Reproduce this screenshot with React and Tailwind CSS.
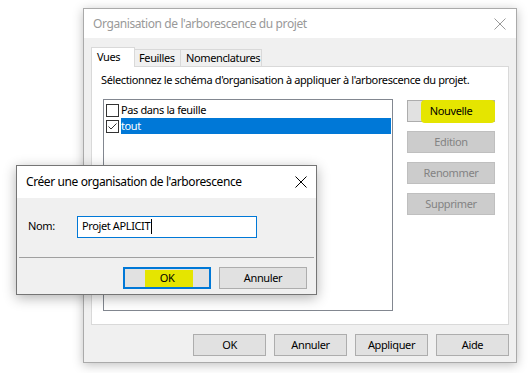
const font = { fontFamily: '"Noto Sans", "Liberation Sans", sans-serif' };

function CloseIcon({ className }) {
  return (
    <svg width="12" height="12" viewBox="0 0 12 12" className={className}>
      <path d="M0.5 0.5 L11.5 11.5 M11.5 0.5 L0.5 11.5" stroke="currentColor" strokeWidth="1" />
    </svg>
  );
}

function Button({ children, disabled, className = "" }) {
  return (
    <div
      className={`flex h-[22px] items-center justify-center border ${
        disabled
          ? "border-[#bfbfbf] bg-[#cccccc] text-[#838383]"
          : "border-[#adadad] bg-[#e1e1e1] text-black"
      } ${className}`}
    >
      {children}
    </div>
  );
}

function Checkbox({ checked }) {
  return (
    <div className="flex h-[13px] w-[13px] shrink-0 items-center justify-center border border-[#333333] bg-white">
      {checked && (
        <svg width="11" height="11" viewBox="0 0 11 11">
          <path d="M1.5 5.5 L4 8 L9.5 2.5" stroke="#333" strokeWidth="1" fill="none" />
        </svg>
      )}
    </div>
  );
}

function MainWindow() {
  return (
    <div className="absolute left-[83px] top-[8px] flex h-[355px] w-[434px] flex-col border border-[#aaaaaa] bg-[#f0f0f0] shadow-[0_2px_10px_rgba(0,0,0,0.25)]">
      {/* title bar */}
      <div className="flex h-[29px] shrink-0 items-center justify-between bg-white pl-[9px] pr-[10px]">
        <span className="text-[12px] tracking-[-0.4px] text-[#999999]">Organisation de l'arborescence du projet</span>
        <CloseIcon className="text-[#999999]" />
      </div>

      <div className="flex flex-1 flex-col px-[7px] pb-[7px] pt-[9px]">
        {/* tabs */}
        <div className="relative z-10 flex h-[19px] items-end">
          <div className="-mb-px flex h-[20px] w-[44px] items-start border border-b-0 border-[#d9d9d9] bg-white pl-[5px] pt-[1px]">
            Vues
          </div>
          <div className="flex h-[17px] w-[46px] items-center border border-b-0 border-l-0 border-[#d9d9d9] pl-[4px]">
            Feuilles
          </div>
          <div className="flex h-[17px] w-[81px] items-center border border-b-0 border-l-0 border-[#d9d9d9] pl-[5px]">
            Nomenclatures
          </div>
        </div>

        {/* tab panel */}
        <div className="flex h-[259px] flex-col border border-[#d9d9d9] bg-white pl-[9px] pr-[13px]">
          <div className="mt-[4px] h-[17px] leading-[17px]">
            Sélectionnez le schéma d'organisation à appliquer à l'arborescence du projet.
          </div>
          <div className="mt-[11px] flex gap-[14px] pl-[2px]">
            {/* list */}
            <div className="flex h-[212px] w-[290px] flex-col border border-[#828790] bg-white pl-[2px] pr-[1px] pt-[3px]">
              <div className="flex h-[14px] items-center gap-[2px]">
                <Checkbox />
                <span className="leading-[14px]">Pas dans la feuille</span>
              </div>
              <div className="mt-[1px] flex h-[16px] items-center gap-[2px]">
                <Checkbox checked />
                <span className="flex h-[16px] flex-1 items-center bg-[#0078d7] text-white">tout</span>
              </div>
            </div>
            {/* side buttons */}
            <div className="flex w-[88px] flex-col gap-[9px] pt-[1px]">
              <Button className="relative">
                <span className="absolute left-[13px] top-[-1px] h-[23px] w-[74px] rounded-[4px] bg-[#e5e500]" />
                <span className="relative">Nouvelle</span>
              </Button>
              <Button disabled>Edition</Button>
              <Button disabled>Renommer</Button>
              <Button disabled>Supprimer</Button>
            </div>
          </div>
        </div>

        {/* bottom buttons */}
        <div className="mt-[9px] flex justify-end gap-[8px]">
          <Button className="w-[73px]">OK</Button>
          <Button className="w-[73px]">Annuler</Button>
          <Button className="w-[73px]">Appliquer</Button>
          <Button className="w-[73px]">Aide</Button>
        </div>
      </div>
    </div>
  );
}

function CreateDialog() {
  return (
    <div className="absolute left-[16px] top-[165px] z-20 flex h-[130px] w-[301px] flex-col border border-[#757575] bg-[#f0f0f0] shadow-[0_3px_12px_rgba(0,0,0,0.3)]">
      <div className="flex h-[32px] shrink-0 items-center justify-between bg-white pl-[9px] pr-[9px]">
        <span className="text-[12px] tracking-[-0.4px] text-black">Créer une organisation de l'arborescence</span>
        <CloseIcon className="text-black" />
      </div>
      <div className="flex h-[59px] items-center pb-[2px] pl-[11px]">
        <span className="w-[49px]">Nom:</span>
        <div className="flex h-[22px] w-[180px] items-center border border-[#0078d7] bg-white pl-[4px]">
          Projet APLICIT
          <span className="ml-px h-[15px] w-px bg-black" />
        </div>
      </div>
      <div className="mx-[2px] h-px bg-[#a0a0a0]" />
      <div className="flex flex-1 items-start justify-end gap-[8px] pr-[9px] pt-[9px]">
        <div className="relative flex h-[22px] w-[88px] items-center justify-center border-2 border-[#0078d7] bg-[#e1e1e1]">
          <span className="absolute left-[20px] top-[1px] h-[17px] w-[48px] bg-[#e5e500]" />
          <span className="relative">OK</span>
        </div>
        <Button className="w-[88px]">Annuler</Button>
      </div>
    </div>
  );
}

export default function App() {
  return (
    <div
      className="relative h-[373px] w-[528px] overflow-hidden bg-white text-[11px] tracking-[-0.38px] text-black"
      style={font}
    >
      <MainWindow />
      <CreateDialog />
    </div>
  );
}
